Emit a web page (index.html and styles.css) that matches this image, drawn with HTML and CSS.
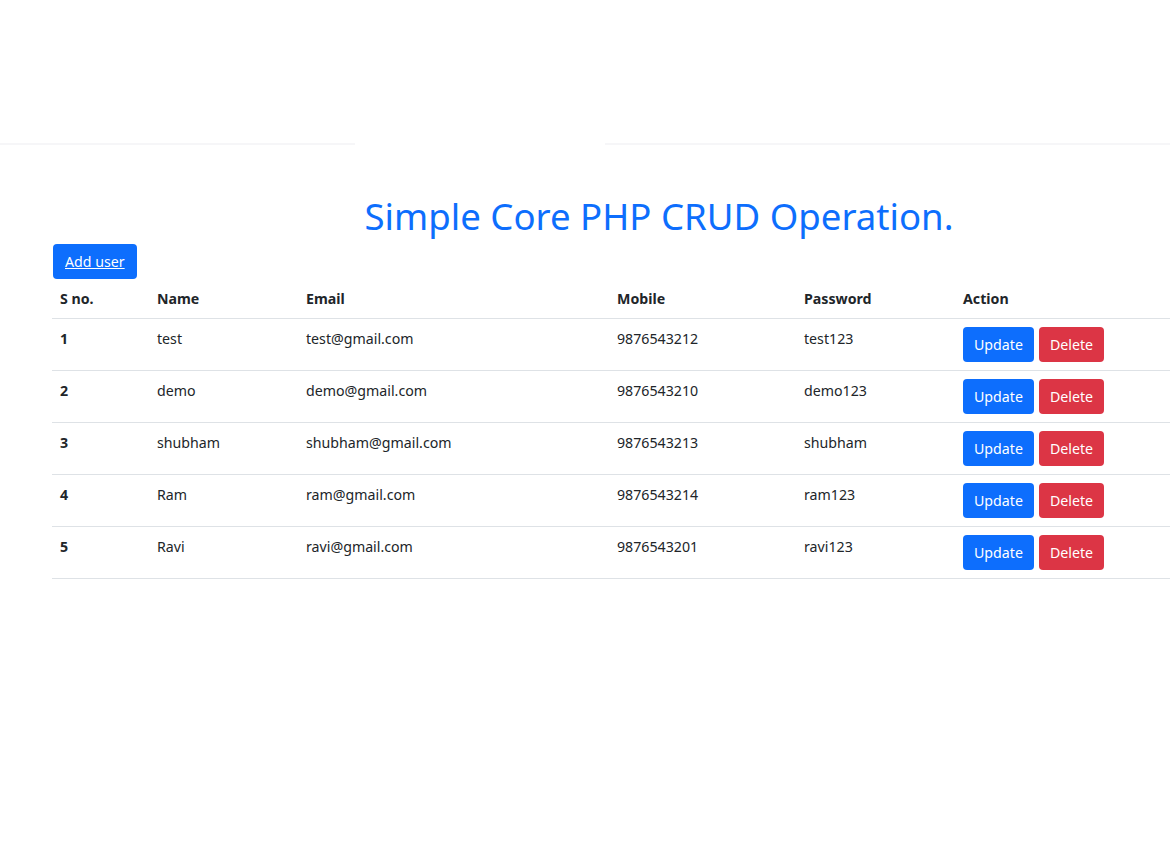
FILE: index.html
```html
<!DOCTYPE html>
<html>
<head>
<meta charset="utf-8">
<title>Simple Core PHP CRUD Operation</title>
<link rel="stylesheet" href="styles.css">
</head>
<body>
<div class="topbar">
  <div class="topbar-line left"></div>
  <div class="topbar-line right"></div>
</div>
<main class="container">
  <h2 class="title">Simple Core PHP CRUD Operation.</h2>
  <a class="btn btn-primary add" href="#">Add user</a>
  <table class="table">
    <thead>
      <tr><th class="c1">S no.</th><th class="c2">Name</th><th class="c3">Email</th><th class="c4">Mobile</th><th class="c5">Password</th><th>Action</th></tr>
    </thead>
    <tbody>
      <tr><th>1</th><td>test</td><td>test@gmail.com</td><td>9876543212</td><td>test123</td><td><div class="actions"><a class="btn btn-primary" href="#">Update</a><a class="btn btn-danger" href="#">Delete</a></div></td></tr>
      <tr><th>2</th><td>demo</td><td>demo@gmail.com</td><td>9876543210</td><td>demo123</td><td><div class="actions"><a class="btn btn-primary" href="#">Update</a><a class="btn btn-danger" href="#">Delete</a></div></td></tr>
      <tr><th>3</th><td>shubham</td><td>shubham@gmail.com</td><td>9876543213</td><td>shubham</td><td><div class="actions"><a class="btn btn-primary" href="#">Update</a><a class="btn btn-danger" href="#">Delete</a></div></td></tr>
      <tr><th>4</th><td>Ram</td><td>ram@gmail.com</td><td>9876543214</td><td>ram123</td><td><div class="actions"><a class="btn btn-primary" href="#">Update</a><a class="btn btn-danger" href="#">Delete</a></div></td></tr>
      <tr><th>5</th><td>Ravi</td><td>ravi@gmail.com</td><td>9876543201</td><td>ravi123</td><td><div class="actions"><a class="btn btn-primary" href="#">Update</a><a class="btn btn-danger" href="#">Delete</a></div></td></tr>
    </tbody>
  </table>
</main>
</body>
</html>
```
FILE: styles.css
```css
html, body {
  margin: 0;
  padding: 0;
  background: #fff;
  overflow: hidden;
}
body {
  font-family: "Noto Sans", "Open Sans", sans-serif;
  font-size: 14.2px;
  color: #212529;
  line-height: 1.5;
}
.topbar {
  height: 145px;
  display: flex;
  align-items: flex-end;
  gap: 250px;
}
.topbar-line {
  height: 2px;
  background: #f6f6f8;
}
.topbar-line.left { width: 355px; }
.topbar-line.right { flex: 1; }
.container {
  padding-left: 52px;
}
.title {
  margin: 45px 0 2px 0;
  padding-left: 277px;
  width: 660px;
  text-align: center;
  font-size: 36.6px;
  font-weight: 400;
  line-height: 52px;
  color: #0d6efd;
  white-space: nowrap;
}
.btn {
  display: inline-block;
  padding: 6px 12px;
  font-size: 14.2px;
  line-height: 23px;
  border-radius: 4px;
  color: #fff;
  text-decoration: none;
}
.btn-primary { background: #0d6efd; }
.btn-danger { background: #dc3545; }
.add {
  margin-left: 1px;
  text-decoration: underline;
}
.table {
  width: 100%;
  border-collapse: collapse;
  margin-top: 0;
}
.table th, .table td {
  text-align: left;
  padding: 8px;
  line-height: 24px;
  vertical-align: top;
  border-bottom: 1px solid #dee2e6;
}
.table thead th { font-weight: 700; padding: 10px 8px 9px; line-height: 20px; }
.table tbody th { font-weight: 700; }
.table tbody td, .table tbody th { height: 35px; }
.c1 { width: 81px; }
.c2 { width: 133px; }
.c3 { width: 295px; }
.c4 { width: 171px; }
.c5 { width: 143px; }
.actions { display: flex; gap: 5px; }
.actions .btn { padding: 6px 11px; }
```
